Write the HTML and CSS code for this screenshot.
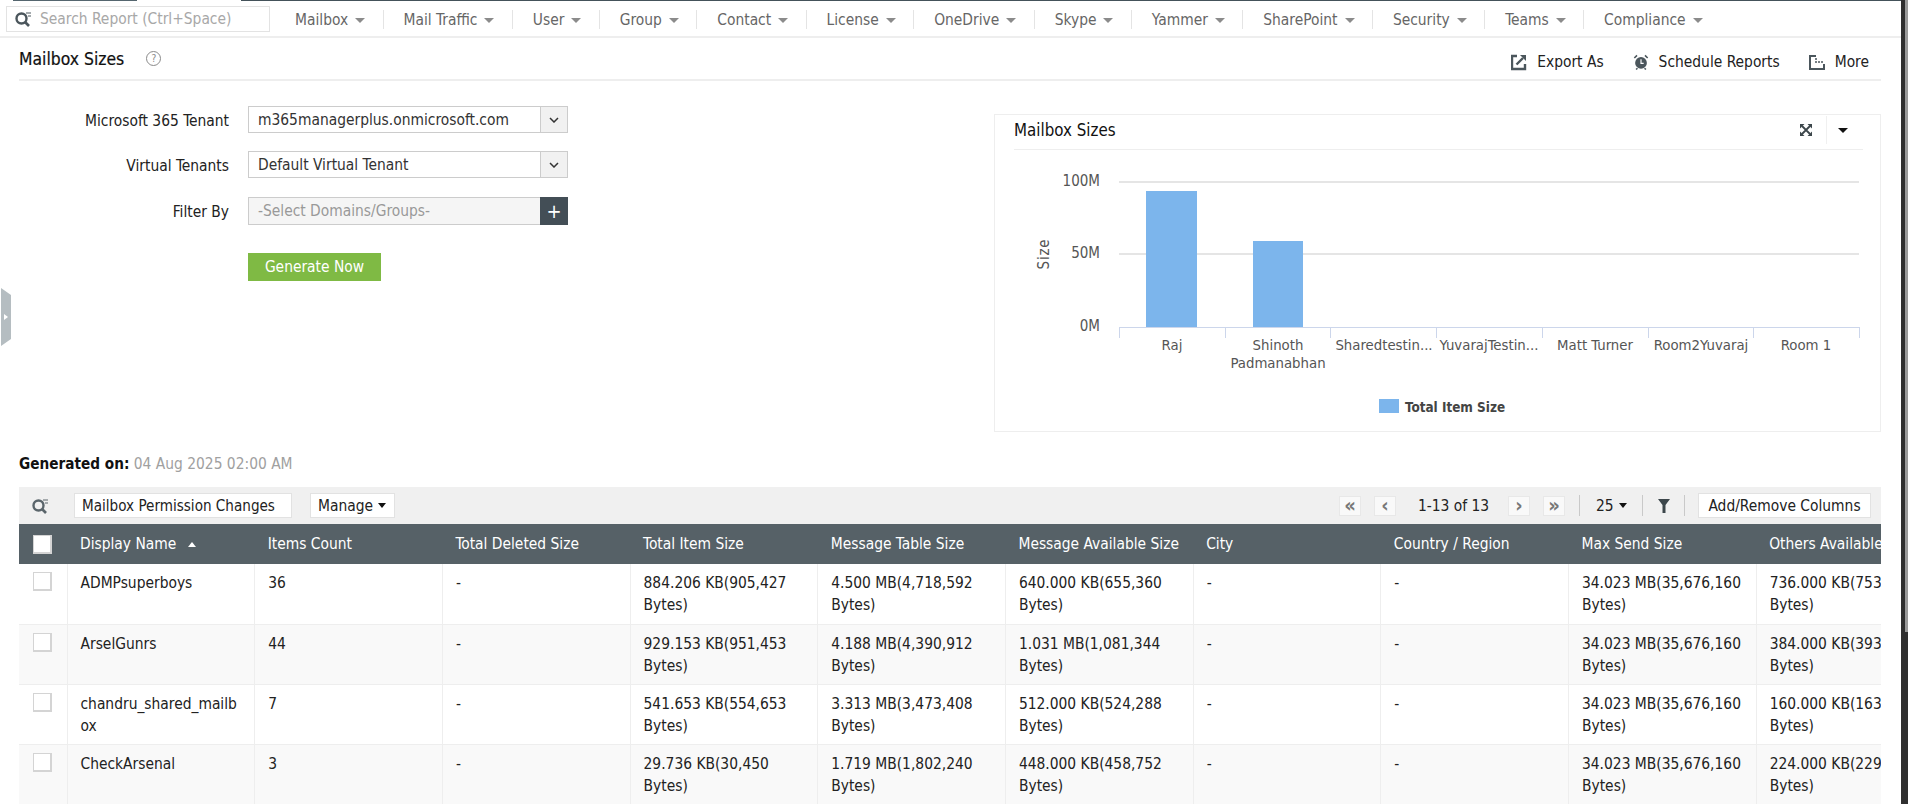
FILE: index.html
```html
<!DOCTYPE html>
<html lang="en">
<head>
<meta charset="utf-8">
<title>Mailbox Sizes</title>
<link rel="stylesheet" href="styles.css">
</head>
<body>
<div class="app">
<div class="main">
<div class="topline"></div>
<header class="topbar">
  <div class="search">
    <svg class="search-ico" viewBox="0 0 18 18"><circle cx="7.5" cy="8.5" r="5" fill="none" stroke="#4b565c" stroke-width="2.4"/><path d="M11 12l4 4" stroke="#4b565c" stroke-width="2.6"/><path d="M12 3h5M14 6h3" stroke="#4b565c" stroke-width="1.2"/></svg>
    <span>Search Report (Ctrl+Space)</span>
  </div>
  <nav class="nav">
    <a>Mailbox<i></i></a><a>Mail Traffic<i></i></a><a>User<i></i></a><a>Group<i></i></a><a>Contact<i></i></a><a>License<i></i></a><a>OneDrive<i></i></a><a>Skype<i></i></a><a>Yammer<i></i></a><a>SharePoint<i></i></a><a>Security<i></i></a><a>Teams<i></i></a><a>Compliance<i></i></a>
  </nav>
</header>
<section class="content">
  <div class="titlebar">
    <h1>Mailbox Sizes</h1>
    <span class="help">?</span>
    <div class="actions">
      <a><svg viewBox="0 0 16 16"><path d="M6 2H1v13h13v-5" fill="none" stroke="#4b565c" stroke-width="2.400"/><path d="M5.500 10.500L12 4" fill="none" stroke="#4b565c" stroke-width="2.400"/><path d="M9 1h6v6z" fill="#4b565c"/></svg>Export As</a>
      <a><svg viewBox="0 0 18 18"><circle cx="9" cy="10" r="6.600" fill="#4b565c"/><path d="M9 6v4.500h3" fill="none" stroke="#fff" stroke-width="1.300"/><path d="M1.500 4.500l3-3M16.500 4.500l-3-3M5 16l-1.500 1.500M13 16l1.500 1.500" stroke="#4b565c" stroke-width="1.800"/></svg>Schedule Reports</a>
      <a><svg viewBox="0 0 16 16"><path d="M7 2H1v13h14v-5" fill="none" stroke="#4b565c" stroke-width="2"/><path d="M6 8h2M9 8h2M12 8h2M6 5h2" stroke="#4b565c" stroke-width="1.600"/></svg>More</a>
    </div>
  </div>
  <div class="top-row">
    <div class="form">
      <div class="frow"><label>Microsoft 365 Tenant</label><div class="select"><span>m365managerplus.onmicrosoft.com</span><b><svg viewBox="0 0 10 6"><path d="M1 1l4 4 4-4" fill="none" stroke="#333" stroke-width="1.500"/></svg></b></div></div>
      <div class="frow"><label>Virtual Tenants</label><div class="select"><span>Default Virtual Tenant</span><b><svg viewBox="0 0 10 6"><path d="M1 1l4 4 4-4" fill="none" stroke="#333" stroke-width="1.500"/></svg></b></div></div>
      <div class="frow frow-f"><label>Filter By</label><div class="select filter"><span>-Select Domains/Groups-</span><b>+</b></div></div>
      <button class="generate">Generate Now</button>
    </div>
    <div class="card">
      <div class="card-head">
        <span>Mailbox Sizes</span>
        <svg class="expand" viewBox="0 0 14 14"><path d="M1 1h4.500L1 5.500zM13 1v4.500L8.500 1zM1 13V8.500L5.500 13zM13 13H8.500L13 8.500z" fill="#3c464b"/><path d="M3 3l8 8M11 3l-8 8" stroke="#3c464b" stroke-width="1.800"/></svg>
        <i class="card-sep"></i>
        <i class="card-caret"></i>
      </div>
      <svg class="chart" viewBox="0 0 887 282" width="887" height="282">
        <g class="grid"><path d="M125 33H865M125 105H865"/></g>
        <g class="ylab"><text x="106" y="37">100M</text><text x="106" y="109">50M</text><text x="106" y="182">0M</text></g>
        <text class="ytitle" transform="translate(55 105) rotate(-90)" text-anchor="middle">Size</text>
        <rect class="bar" x="152" y="42" width="51" height="136"/>
        <rect class="bar" x="259" y="92" width="50" height="86"/>
        <path class="axis" d="M125 178.500H865M125.500 178V189M231.500 178V189M336.500 178V189M442.500 178V189M548.500 178V189M654.500 178V189M759.500 178V189M865.500 178V189"/>
        <g class="xlab">
          <text x="178" y="201">Raj</text>
          <text x="284" y="201">Shinoth</text><text x="284" y="219">Padmanabhan</text>
          <text x="390" y="201">Sharedtestin...</text>
          <text x="495" y="201">YuvarajTestin...</text>
          <text x="601" y="201">Matt Turner</text>
          <text x="707" y="201">Room2Yuvaraj</text>
          <text x="812" y="201">Room 1</text>
        </g>
        <rect class="bar" x="385" y="250" width="20" height="14"/>
        <text class="legend" x="411" y="263">Total Item Size</text>
      </svg>
    </div>
  </div>
  <p class="generated"><b>Generated on:</b> <span>04 Aug 2025 02:00 AM</span></p>
  <div class="toolbar">
    <svg class="tb-search" viewBox="0 0 18 18"><circle cx="7.500" cy="8.500" r="5" fill="none" stroke="#5a656b" stroke-width="2.400"/><path d="M11 12l4 4" stroke="#5a656b" stroke-width="2.600"/><path d="M12 3h5M14 6h3" stroke="#5a656b" stroke-width="1.200"/></svg>
    <button class="tbtn perm">Mailbox Permission Changes</button>
    <button class="tbtn manage">Manage<i></i></button>
    <div class="pager">
      <span class="pg">«</span><span class="pg">‹</span><span class="count">1-13 of 13</span><span class="pg">›</span><span class="pg">»</span>
      <i class="vsep first"></i>
      <span class="size">25<i></i></span>
      <i class="vsep"></i>
      <svg class="funnel" viewBox="0 0 12 14"><path d="M0 0h12L7.500 6v8h-3V6z" fill="#3c464b"/></svg>
      <i class="vsep"></i>
      <button class="tbtn addrem">Add/Remove Columns</button>
    </div>
  </div>
  <div class="table-wrap">
  <table>
    <colgroup><col class="c0"><col span="10" class="cn"></colgroup>
    <thead><tr>
      <th class="chk"><span class="box"></span></th>
      <th>Display Name<i class="sort"></i></th><th>Items Count</th><th>Total Deleted Size</th><th>Total Item Size</th><th>Message Table Size</th><th>Message Available Size</th><th>City</th><th>Country / Region</th><th>Max Send Size</th><th>Others Available Size</th>
    </tr></thead>
    <tbody>
      <tr><td class="chk"><span class="box"></span></td><td>ADMPsuperboys</td><td>36</td><td>-</td><td>884.206 KB(905,427 Bytes)</td><td>4.500 MB(4,718,592 Bytes)</td><td>640.000 KB(655,360 Bytes)</td><td>-</td><td>-</td><td>34.023 MB(35,676,160 Bytes)</td><td>736.000 KB(753,664 Bytes)</td></tr>
      <tr><td class="chk"><span class="box"></span></td><td>ArselGunrs</td><td>44</td><td>-</td><td>929.153 KB(951,453 Bytes)</td><td>4.188 MB(4,390,912 Bytes)</td><td>1.031 MB(1,081,344 Bytes)</td><td>-</td><td>-</td><td>34.023 MB(35,676,160 Bytes)</td><td>384.000 KB(393,216 Bytes)</td></tr>
      <tr><td class="chk"><span class="box"></span></td><td>chandru_shared_mailbox</td><td>7</td><td>-</td><td>541.653 KB(554,653 Bytes)</td><td>3.313 MB(3,473,408 Bytes)</td><td>512.000 KB(524,288 Bytes)</td><td>-</td><td>-</td><td>34.023 MB(35,676,160 Bytes)</td><td>160.000 KB(163,840 Bytes)</td></tr>
      <tr><td class="chk"><span class="box"></span></td><td>CheckArsenal</td><td>3</td><td>-</td><td>29.736 KB(30,450 Bytes)</td><td>1.719 MB(1,802,240 Bytes)</td><td>448.000 KB(458,752 Bytes)</td><td>-</td><td>-</td><td>34.023 MB(35,676,160 Bytes)</td><td>224.000 KB(229,376 Bytes)</td></tr>
    </tbody>
  </table>
  </div>
</section>
<div class="handle"><i></i></div>
</div>
<div class="gutter"><div class="thumb"></div></div>
</div>
</body>
</html>
```

FILE: styles.css
```css
* { box-sizing: border-box; }
html, body { margin: 0; height: 100%; overflow: hidden; background: #fff; }
body { font-family: "DejaVu Sans Condensed", "DejaVu Sans", sans-serif; font-stretch: condensed; font-size: 15.400px; color: #222; }
.app { display: flex; width: 1908px; height: 804px; overflow: hidden; }
.main { position: relative; width: 1901px; height: 804px; flex: none; overflow: hidden; }
.gutter { flex: 1; background: #2f2f2f; display: flex; justify-content: flex-end; }
.thumb { width: 3px; height: 632px; background: #9a9a9a; }
.topline { height: 1px; background: linear-gradient(to right, #fff 13px, #55666f 13px, #55666f 137px, #fff 137px, #fff 241px, #44525a 241px); }

.topbar { display: flex; align-items: center; height: 38px; border-bottom: 2px solid #eee; padding: 2px 0 0 6px; margin-top: -1px; }
.search { display: flex; align-items: center; width: 264px; height: 26px; border: 1px solid #e3e3e3; padding-left: 7px; color: #a8a8a8; }
.search-ico { width: 18px; height: 18px; margin-right: 8px; }
.nav { display: flex; margin-left: 5px; }
.nav a { display: flex; align-items: center; height: 19px; padding: 1px 17.400px 0 20px; color: #666; border-right: 1px solid #e4e4e4; }
.nav a:last-child { border-right: 0; }
.nav i { width: 0; height: 0; margin: 2px 0 0 7px; border: 5px solid transparent; border-top: 5px solid #8b8b8b; border-bottom: 0; }

.content { padding: 0 20px 0 19px; }
.titlebar { display: flex; align-items: center; height: 43px; border-bottom: 2px solid #eee; }
.titlebar h1 { margin: 0; font-size: 17.400px; font-weight: 400; color: #111; -webkit-text-stroke: .2px #111; }
.help { display: flex; align-items: center; justify-content: center; width: 15px; height: 15px; margin-left: 22px; border: 1px solid #8a8a8a; border-radius: 50%; font-size: 10px; color: #8a8a8a; }
.actions { display: flex; margin-left: auto; gap: 29px; padding: 6px 12px 0 0; }
.actions a { display: flex; align-items: center; gap: 10px; color: #222; }
.actions svg { width: 16px; height: 18px; }

.top-row { display: flex; justify-content: space-between; height: 372px; }
.form { padding-top: 25px; }
.frow { display: flex; align-items: center; height: 27px; margin-bottom: 18px; }
.frow-f { height: 28px; margin: 19px 0 28px; }
.frow label { width: 210px; text-align: right; margin-right: 19px; padding-top: 2px; color: #222; white-space: nowrap; }
.select { display: flex; width: 320px; height: 100%; border: 1px solid #ccc; }
.select span { flex: 1; padding-left: 9px; line-height: 27px; color: #333; }
.select b { display: flex; align-items: center; justify-content: center; width: 27px; background: #f1f1f1; border-left: 1px solid #ccc; }
.select svg { width: 10px; height: 6px; }
.filter { background: #f5f5f5; }
.filter span { color: #999; line-height: 27px; }
.filter b { width: 28px; margin: -1px -1px -1px 0; background: #434e56; border: 0; color: #fff; font-size: 20px; font-weight: 400; }
.generate { display: block; margin-left: 229px; width: 133px; height: 28px; border: 0; background: #7fba44; color: #fff; font: inherit; }

.card { width: 887px; height: 318px; margin-top: 33px; border: 1px solid #eee; padding: 0; }
.card-head { display: flex; align-items: center; height: 35px; margin: 0 17px 0 19px; border-bottom: 1px solid #eee; color: #111; padding-bottom: 4px; font-size: 16.800px; }
.expand { width: 14px; height: 14px; margin-left: auto; }
.card-sep { width: 1px; height: 28px; margin-left: 13px; background: #f0f0f0; }
.card-caret { width: 0; height: 0; margin: 0 15px 0 11px; border: 5px solid transparent; border-top: 5px solid #111; border-bottom: 0; }
.chart { display: block; margin: -1px 0 0 -1px; font-family: inherit; }
.grid path { stroke: #ddd; stroke-width: 1.500; fill: none; }
.ylab text { text-anchor: end; font-size: 15px; fill: #555; }
.ytitle { font-size: 15px; fill: #555; letter-spacing: .8px; }
.bar { fill: #7cb5ec; }
.axis { stroke: #ccd6eb; fill: none; }
.xlab text { text-anchor: middle; font-size: 14.800px; fill: #555; }
.legend { font-size: 13.400px; font-weight: 700; fill: #444; }

.generated { margin: 0; height: 34px; padding-top: 1px; line-height: 20px; color: #a0a0a0; }
.generated b { color: #111; font-size: 15.200px; }
.toolbar { display: flex; align-items: center; height: 37px; background: #f0f0f0; padding-left: 12px; }
.tb-search { width: 18px; height: 18px; margin-right: 25px; }
.tbtn { height: 25px; padding: 0 7px; border: 1px solid #e2e2e2; background: #fff; font: inherit; color: #222; white-space: nowrap; }
.perm { width: 218px; text-align: left; font-size: 15.100px; }
.manage { display: flex; align-items: center; margin-left: 18px; width: 85px; }
.manage i, .size i { display: inline-block; width: 0; height: 0; margin-left: 5px; border: 4.500px solid transparent; border-top: 5px solid #111; border-bottom: 0; }
.pager { display: flex; align-items: center; margin-left: auto; padding-right: 10px; }
.pg { display: flex; align-items: center; justify-content: center; width: 22px; height: 20px; background: #f9f9f9; border: 1px solid #e8e8e8; color: #777; font-size: 20px; font-weight: 700; line-height: 16px; padding-bottom: 2px; margin-right: 13px; }
.count { width: 81px; margin: 0 9px 0 9px; white-space: nowrap; }
.vsep { width: 1px; height: 21px; background: #c9c9c9; }
.vsep.first { margin-left: 1px; }
.size { display: flex; align-items: center; width: 62px; padding-left: 16px; }
.funnel { width: 12px; height: 14px; margin: 0 14px 0 15px; }
.addrem { margin-left: 13px; width: 173px; }

.table-wrap { overflow: hidden; }
table { border-collapse: collapse; table-layout: fixed; width: 1925px; }
.c0 { width: 48px; }
.cn { width: 187.700px; }
th { height: 40px; background: #566167; color: #fff; font-weight: 400; text-align: left; padding: 0 13px; white-space: nowrap; }
td { height: 60px; vertical-align: top; padding: 8px 13px 0; line-height: 22px; border-left: 1px solid #eee; border-bottom: 1px solid #eee; overflow-wrap: anywhere; color: #222; }
td.chk { border-left: 0; }
tbody tr:nth-child(even) td { background: #f9f9f9; }
.chk { padding: 0 0 0 14px; }
td.chk { padding-top: 8px; }
.box { display: block; width: 19px; height: 19px; background: #fff; border: 2px solid #d4d4d4; border-width: 1px 2px 2px 1px; }
.sort { display: inline-block; width: 0; height: 0; margin-left: 12px; vertical-align: 2px; border: 4.500px solid transparent; border-bottom: 5px solid #fff; border-top: 0; }

.handle { position: absolute; left: 1px; top: 288px; width: 10px; height: 58px; background: #b5bdc1; clip-path: polygon(0 0, 100% 12%, 100% 88%, 0 100%); display: flex; align-items: center; justify-content: center; }
.handle i { width: 0; height: 0; border: 3px solid transparent; border-left: 4px solid #fff; border-right: 0; }
```
